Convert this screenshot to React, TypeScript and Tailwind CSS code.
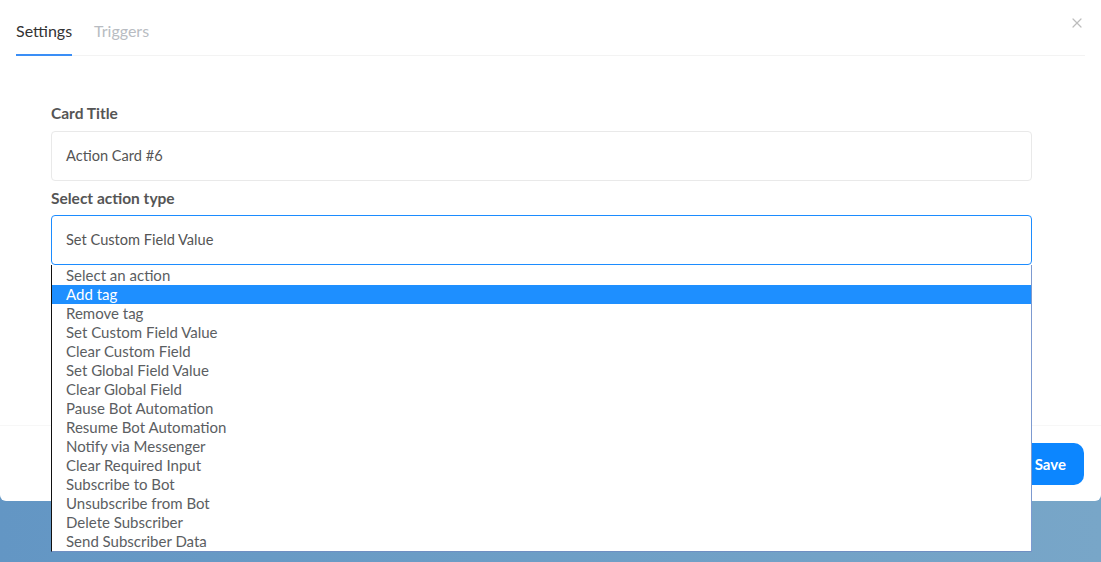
import { X } from 'lucide-react'

const ACTIONS = [
  'Select an action',
  'Add tag',
  'Remove tag',
  'Set Custom Field Value',
  'Clear Custom Field',
  'Set Global Field Value',
  'Clear Global Field',
  'Pause Bot Automation',
  'Resume Bot Automation',
  'Notify via Messenger',
  'Clear Required Input',
  'Subscribe to Bot',
  'Unsubscribe from Bot',
  'Delete Subscriber',
  'Send Subscriber Data',
]

export default function App() {
  return (
    <div
      className="relative h-[562px] w-full overflow-hidden bg-gradient-to-r from-[#6396c4] to-[#78a6c8]"
      style={{ fontFamily: 'Lato, "Open Sans", sans-serif' }}
    >
      {/* Modal */}
      <div className="relative flex h-[501px] flex-col rounded-b-[6px] bg-white">
        <button className="absolute right-[16px] top-[15px] text-[#bdbdbd]">
          <X size={16} strokeWidth={1.8} />
        </button>

        {/* Tabs */}
        <div className="mx-4 mr-[16px] flex gap-[22px] border-b border-[#f3f3f3] pt-[20px]">
          <div className="-mb-px border-b-2 border-[#3a8ef6] pb-[12px] text-[16px] leading-[22px] text-[#333]">
            Settings
          </div>
          <div className="pb-[12px] text-[16px] leading-[22px] text-[#b8bcc2]">Triggers</div>
        </div>

        {/* Body */}
        <div className="flex-1 pl-[51px] pr-[69px] pt-[46px]">
          <label className="mb-[7px] block text-[15.5px] font-bold leading-[22px] text-[#555]">Card Title</label>
          <div className="flex h-[50px] items-center rounded-[4px] border border-[#e9e9e9] px-[14px] text-[14.6px] text-[#555]">
            Action Card #6
          </div>

          <label className="mb-[6px] mt-[6px] block text-[15.5px] font-bold leading-[22px] text-[#555]">
            Select action type
          </label>
          <div className="flex h-[50px] items-center rounded-[4px] border border-[#1c8cff] px-[14px] text-[14.6px] text-[#555]">
            Set Custom Field Value
          </div>

          <div className="mt-[34px] h-[50px] rounded-[4px] border border-[#f0f0f0]" />
        </div>

        {/* Footer */}
        <div className="flex justify-end border-t border-[#f7f7f7] px-[17px] pb-[16px] pt-[17px]">
          <button className="h-[42px] rounded-[10px] bg-[#0c86ff] px-[18px] text-[15px] font-bold text-white">
            Save
          </button>
        </div>
      </div>

      {/* Open native-like dropdown */}
      <ul className="absolute left-[51px] top-[265px] w-[981px] border-b border-l border-r border-b-[#6f8fc2] border-l-[#111] border-r-[#7d9ad0] bg-white pt-px">
        {ACTIONS.map((a) => (
          <li
            key={a}
            className={
              a === 'Add tag'
                ? 'bg-[#1e8fff] pl-[14px] text-[15px] leading-[19px] text-white'
                : 'pl-[14px] text-[15px] leading-[19px] text-[#5b5e62]'
            }
          >
            {a}
          </li>
        ))}
      </ul>
    </div>
  )
}
